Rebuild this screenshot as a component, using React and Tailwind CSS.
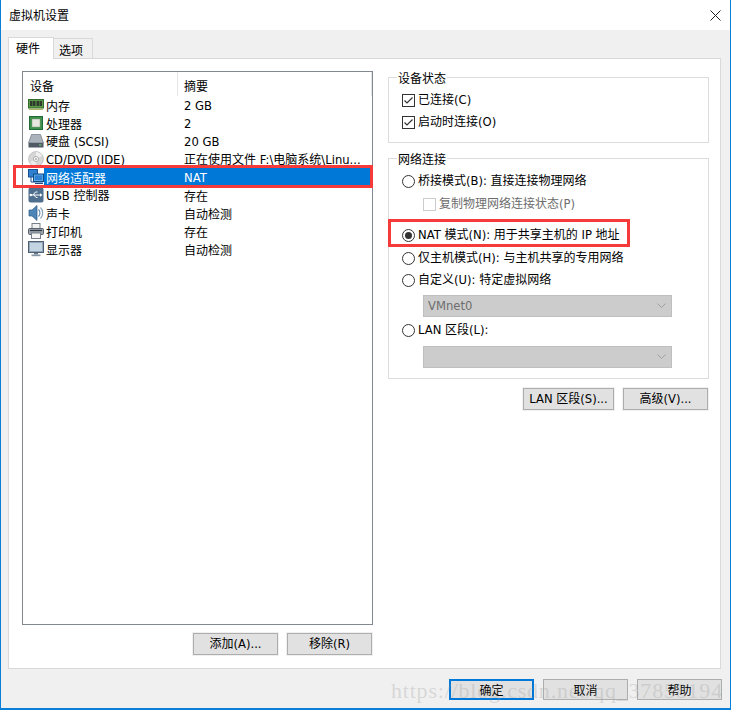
import React from "react";

const IconRam = () => (
  <svg width="16" height="16" viewBox="0 0 16 16" className="block">
    <rect x="0.5" y="2.5" width="15" height="8.5" fill="#5f9a4c" stroke="#2f6b2c" />
    <rect x="2" y="4" width="2.5" height="5" fill="#2d3a2c" />
    <rect x="5" y="4" width="2.5" height="5" fill="#2d3a2c" />
    <rect x="8.5" y="4" width="2.5" height="5" fill="#2d3a2c" />
    <rect x="11.5" y="4" width="2.5" height="5" fill="#2d3a2c" />
    <path d="M1 11.5h14v1.5H1z" fill="#a8b56a" />
  </svg>
);
const IconCpu = () => (
  <svg width="16" height="16" viewBox="0 0 16 16" className="block">
    <rect x="1.5" y="1.5" width="13" height="13" fill="#3f8f4c" stroke="#1f6a35" />
    <rect x="4" y="4" width="8" height="8" fill="#e6e6e0" stroke="#7f9f80" strokeWidth="0.5" />
  </svg>
);
const IconDisk = () => (
  <svg width="16" height="16" viewBox="0 0 16 16" className="block">
    <path d="M3.5 1.5h9l3 8.5H.5z" fill="#aab2bb" stroke="#6b7580" strokeWidth="0.7" />
    <rect x="0.5" y="10" width="15" height="4.5" rx="0.5" fill="#4f5a66" />
    <rect x="11" y="11.5" width="2.5" height="1" fill="#7fd07f" />
  </svg>
);
const IconCd = () => (
  <svg width="16" height="16" viewBox="0 0 16 16" className="block">
    <circle cx="8" cy="8" r="7.5" fill="#d6d6d6" stroke="#b0b0b0" strokeWidth="0.6" />
    <path d="M8 1a7 7 0 0 1 6 4L8 8z" fill="#efefef" />
    <path d="M8 15a7 7 0 0 1-6-4l6-3z" fill="#ececec" />
    <circle cx="8" cy="8" r="2.6" fill="#f7f7f7" stroke="#9a9a9a" strokeWidth="0.7" />
    <circle cx="8" cy="8" r="1" fill="#a8a8a8" />
  </svg>
);
const IconNet = () => (
  <svg width="16" height="16" viewBox="0 0 16 16" className="block">
    <rect x="0.5" y="0.5" width="9" height="7.5" fill="#2f80d0" stroke="#1c4f8c" />
    <path d="M3 8v5h4" fill="none" stroke="#1c4f8c" />
    <rect x="5.5" y="5" width="10" height="7.5" fill="#59a9e8" stroke="#124a86" />
    <rect x="7" y="6.5" width="7" height="4.5" fill="#2f80d0" />
    <path d="M7 13.5h8v1.5H7z" fill="#1c4f8c" />
  </svg>
);
const IconUsb = () => (
  <svg width="16" height="16" viewBox="0 0 16 16" className="block">
    <rect x="0.5" y="0.5" width="15" height="15" rx="2" fill="#4e6f8e" />
    <path d="M2.5 8h10M5 8l2.5-3h2M6 8l2 2.5h1.5" fill="none" stroke="#fff" strokeWidth="1" />
    <path d="M12 6.2 14.5 8 12 9.8z" fill="#fff" />
    <circle cx="2.8" cy="8" r="1.2" fill="#fff" />
  </svg>
);
const IconSound = () => (
  <svg width="16" height="16" viewBox="0 0 16 16" className="block">
    <path d="M1 5h3L9 0.5v15L4 11H1z" fill="#4f86b8" stroke="#2c5a86" strokeWidth="0.7" />
    <path d="M10.5 4.5a5 5 0 0 1 0 7" fill="none" stroke="#6a8fb0" strokeWidth="1.2" />
    <path d="M12.5 2.5a8 8 0 0 1 0 11" fill="none" stroke="#8aa5bd" strokeWidth="1.2" />
  </svg>
);
const IconPrinter = () => (
  <svg width="16" height="16" viewBox="0 0 16 16" className="block">
    <rect x="4" y="0.5" width="8" height="5" fill="#f2f2f2" stroke="#77808a" />
    <rect x="0.5" y="5.5" width="15" height="6" rx="1" fill="#9aa3ad" stroke="#59626c" />
    <path d="M2 7.5h12" stroke="#2f3640" strokeWidth="1.2" />
    <rect x="3.5" y="10" width="9" height="5.5" fill="#f5f5f5" stroke="#77808a" />
  </svg>
);
const IconMonitor = () => (
  <svg width="16" height="16" viewBox="0 0 16 16" className="block">
    <rect x="0.5" y="0.5" width="15" height="11" fill="#93a7ba" stroke="#4f6072" />
    <rect x="2" y="2" width="12" height="8" fill="#c3d4e3" />
    <path d="M6 12h4v1.5H6z" fill="#6a7b8c" />
    <path d="M3.5 13.5h9v1.7h-9z" fill="#8494a4" />
  </svg>
);

// Latin runs use a wider face than the CJK runs, as the reference does.
const T = ({ children }) => (
  <>
    {String(children)
      .split(/([\u0020-\u007e]+)/)
      .filter(Boolean)
      .map((part, i) =>
        /^[\u0020-\u007e]+$/.test(part) ? (
          <span key={i} className="whitespace-pre font-['DejaVu_Sans',sans-serif] text-[11.6px]">
            {part}
          </span>
        ) : (
          <span key={i}>{part}</span>
        )
      )}
  </>
);

const rows = [
  [IconRam, "内存", "2 GB"],
  [IconCpu, "处理器", "2"],
  [IconDisk, "硬盘 (SCSI)", "20 GB"],
  [IconCd, "CD/DVD (IDE)", "正在使用文件 F:\\电脑系统\\Linu..."],
  [IconNet, "网络适配器", "NAT", true],
  [IconUsb, "USB 控制器", "存在"],
  [IconSound, "声卡", "自动检测"],
  [IconPrinter, "打印机", "存在"],
  [IconMonitor, "显示器", "自动检测"],
];

const Row = ({ Icon, label, summary, selected }) => (
  <div className="flex h-[18px] items-center">
    <div className="ml-[5px] w-[16px] shrink-0">
      <Icon />
    </div>
    <div className={`flex h-[18px] flex-1 items-center pt-px leading-[17px] ${selected ? "bg-[#0078d7] text-white" : ""}`}>
      <span className="w-[140px] shrink-0 pl-[2px]"><T>{label}</T></span>
      <span className="whitespace-nowrap"><T>{summary}</T></span>
    </div>
  </div>
);

const Btn = ({ children, className = "" }) => (
  <div className={`flex items-center justify-center border border-[#adadad] bg-[#e1e1e1] shadow-[0_0_0_1px_#f0f0f0] ${className}`}>
    <span><T>{children}</T></span>
  </div>
);

const Check = ({ disabled }) => (
  <svg width="13" height="13" viewBox="0 0 13 13" className="mr-[3px] block shrink-0">
    <rect x="0.5" y="0.5" width="12" height="12" fill="#fff" stroke={disabled ? "#cccccc" : "#333333"} />
    {!disabled && <path d="M2.5 6.5 5 9l5.5-5.5" fill="none" stroke="#333333" strokeWidth="1.2" />}
  </svg>
);

const Radio = ({ on }) => (
  <svg width="13" height="13" viewBox="0 0 13 13" className="mr-[3px] block shrink-0">
    <circle cx="6.5" cy="6.5" r="6" fill="#fff" stroke="#333333" />
    {on && <circle cx="6.5" cy="6.5" r="3.5" fill="#333333" />}
  </svg>
);

const Option = ({ children, mark, className = "" }) => (
  <div className={`flex h-[18px] items-center whitespace-nowrap ${className}`}>
    {mark}
    <span><T>{children}</T></span>
  </div>
);

const Select = ({ value, className = "" }) => (
  <div className={`ml-[34px] flex h-[22px] w-[249px] items-center justify-between border border-[#bfbfbf] bg-[#cccccc] pl-[4px] pr-[5px] text-[#6d6d6d] ${className}`}>
    <span><T>{value}</T></span>
    <svg width="9" height="6" viewBox="0 0 9 6" className="block">
      <path d="M0.5 0.5 4.5 4.5 8.5 0.5" fill="none" stroke="#a0a0a0" />
    </svg>
  </div>
);

const Legend = ({ children }) => (
  <div className="ml-[8px] -mt-[8px] h-[16px] w-fit bg-white px-[1px] leading-[16px]">{children}</div>
);

export default function App() {
  return (
    <div className="relative h-[711px] w-[732px] overflow-hidden bg-white font-['Noto_Sans_CJK_SC','Noto_Sans',sans-serif] text-[12px] text-black">
      <div className="flex h-[710px] w-[731px] flex-col border-x border-b-2 border-[#0a7fd8]">
        <div className="flex h-[30px] shrink-0 items-center justify-between bg-white pl-[8px] pr-[9px]">
          <span>虚拟机设置</span>
          <svg width="11" height="11" viewBox="0 0 11 11" className="block">
            <path d="M0.5 0.5 10.5 10.5M10.5 0.5 0.5 10.5" stroke="#222" strokeWidth="1" />
          </svg>
        </div>
        <div className="flex flex-1 flex-col bg-[#f0f0f0] pl-[7px]">
          <div className="flex h-[28px] shrink-0 items-end">
            <div className="relative z-10 -mb-px flex h-[22px] w-[46px] items-center border border-b-0 border-[#d9d9d9] bg-white pb-px pl-[7px]">
              硬件
            </div>
            <div className="flex h-[20px] w-[39px] items-center border border-b-0 border-l-0 border-[#d9d9d9] bg-[#f0f0f0] pl-[5px] pt-[2px]">
              选项
            </div>
          </div>
          <div className="flex h-[611px] w-[713px] shrink-0 gap-[15px] border border-[#d9d9d9] bg-white pl-[13px] pt-[12px]">
            <div className="flex w-[351px] shrink-0 flex-col">
              <div className="h-[554px] border border-[#828790] bg-white">
                <div className="flex h-[24px] items-center">
                  <div className="flex h-[24px] w-[155px] items-center border-r border-[#e5e5e5] pl-[7px] pt-[3px]">设备</div>
                  <div className="flex h-[24px] flex-1 items-center border-r border-[#e5e5e5] pl-[6px] pt-[3px]">摘要</div>
                </div>
                {rows.map(([Icon, label, summary, selected]) => (
                  <Row key={label} Icon={Icon} label={label} summary={summary} selected={selected} />
                ))}
              </div>
              <div className="mt-[8px] flex justify-end gap-[9px] pr-px">
                <Btn className="h-[22px] w-[85px]">添加(A)...</Btn>
                <Btn className="h-[22px] w-[85px]">移除(R)</Btn>
              </div>
            </div>
            <div className="mt-[6px] flex w-[321px] shrink-0 flex-col">
              <div className="h-[66px] border border-[#dcdcdc]">
                <Legend>设备状态</Legend>
                <Option className="ml-[13px] mt-[5px]" mark={<Check />}>已连接(C)</Option>
                <Option className="ml-[13px] mt-[4px]" mark={<Check />}>启动时连接(O)</Option>
              </div>
              <div className="mt-[15px] h-[221px] border border-[#dcdcdc]">
                <Legend>网络连接</Legend>
                <Option className="ml-[13px] mt-[5px]" mark={<Radio />}>桥接模式(B): 直接连接物理网络</Option>
                <Option className="ml-[34px] mt-[5px] text-[#6d6d6d]" mark={<Check disabled />}>复制物理网络连接状态(P)</Option>
                <Option className="ml-[13px] mt-[13px]" mark={<Radio on />}>NAT 模式(N): 用于共享主机的 IP 地址</Option>
                <Option className="ml-[13px] mt-[5px]" mark={<Radio />}>仅主机模式(H): 与主机共享的专用网络</Option>
                <Option className="ml-[13px] mt-[4px]" mark={<Radio />}>自定义(U): 特定虚拟网络</Option>
                <Select className="mt-[6px]" value="VMnet0" />
                <Option className="ml-[13px] mt-[4px]" mark={<Radio />}>LAN 区段(L):</Option>
                <Select className="mt-[7px]" value="" />
              </div>
              <div className="mt-[9px] flex justify-end gap-[9px] pr-px">
                <Btn className="h-[22px] w-[91px]">LAN 区段(S)...</Btn>
                <Btn className="h-[22px] w-[85px]">高级(V)...</Btn>
              </div>
            </div>
          </div>
          <div className="flex flex-1 justify-end gap-[9px] pr-[8px] pt-[10px]">
            <div className="flex h-[21px] w-[85px] items-center justify-center border-2 border-[#0078d7] bg-[#e1e1e1]">确定</div>
            <Btn className="h-[21px] w-[85px]">取消</Btn>
            <Btn className="h-[21px] w-[85px]">帮助</Btn>
          </div>
        </div>
      </div>

      {/* red annotation boxes */}
      <div className="absolute left-[13px] top-[165px] h-[23px] w-[360px] border-[3px] border-[#f63a3a]" />
      <div className="absolute left-[388px] top-[219px] h-[28px] w-[242px] border-[3px] border-[#f63a3a]" />

      {/* watermark */}
      <div className="pointer-events-none absolute left-[391px] top-[678px] whitespace-nowrap font-['Liberation_Serif',serif] text-[22px] leading-[26px] tracking-[0.8px] text-[#9a9a9a]/30">
        https://blog.csdn.net/qq_37858194
      </div>
    </div>
  );
}
